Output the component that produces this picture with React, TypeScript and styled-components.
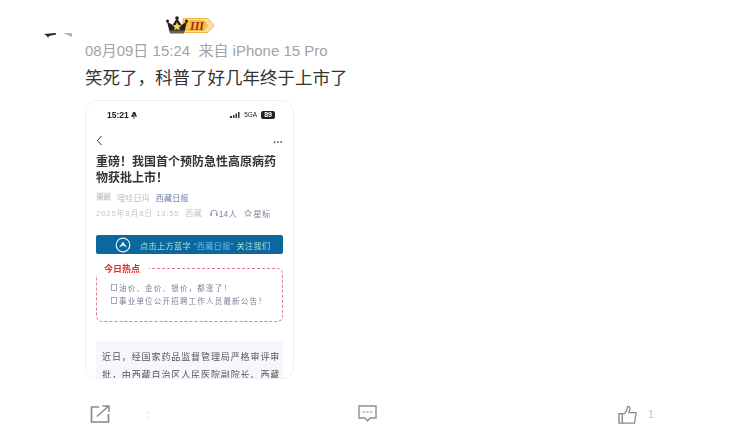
import React from 'react';
import styled, { createGlobalStyle } from 'styled-components';

const cjk = '"Liberation Sans", "Noto Sans CJK SC", sans-serif';

const GlobalStyle = createGlobalStyle`
  html, body {
    margin: 0;
    background: #fff;
  }
  body {
    font-family: ${cjk};
  }
`;

const Page = styled.div`
  width: 746px;
  height: 431px;
  padding-top: 16px;
  box-sizing: border-box;
  overflow: hidden;
`;

const Post = styled.div`
  display: grid;
  grid-template-columns: 85px 1fr;
`;

const AvatarSliver = styled.svg`
  display: block;
  margin: 17px 0 0 44px;
`;

const NameRow = styled.div`
  display: flex;
  height: 18px;
  padding-left: 81px;
`;

const Meta = styled.div`
  margin-top: 8px;
  font-size: 15px;
  line-height: 18px;
  color: #a3a3a3;
  white-space: pre;
`;

const Content = styled.div`
  margin-top: 5px;
  font-size: 17.5px;
  line-height: 26px;
  color: #333;
`;

const PhoneShot = styled.div`
  width: 209px;
  height: 279px;
  margin-top: 9px;
  box-sizing: border-box;
  padding: 0 10px;
  border: 1px solid #f1f1f4;
  border-radius: 12px;
  overflow: hidden;
  background: #fff;
  filter: blur(0.45px);
`;

const StatusBar = styled.div`
  display: flex;
  align-items: center;
  justify-content: space-between;
  height: 27px;
  padding: 0 8px 0 11px;
  font-size: 8.5px;
  font-weight: 700;
  color: #222;
`;

const StatusTime = styled.span`
  display: flex;
  align-items: center;
  gap: 1px;
`;

const StatusRight = styled.div`
  display: flex;
  align-items: center;
  gap: 4px;
  font-size: 6.5px;
  font-weight: 400;
`;

const Battery = styled.span`
  padding: 0 3px;
  border-radius: 2px;
  background: #222;
  color: #fff;
  font-size: 7px;
  font-weight: 700;
  line-height: 8px;
`;

const NavBar = styled.div`
  display: flex;
  align-items: center;
  justify-content: space-between;
  height: 25px;
  padding-bottom: 1px;
  box-sizing: border-box;
`;

const Dots = styled.span`
  font-size: 10px;
  font-weight: 700;
  letter-spacing: 0.5px;
  line-height: 10px;
  color: #555;
`;

const ArticleTitle = styled.div`
  margin-top: 1px;
  font-size: 12px;
  font-weight: 700;
  line-height: 16px;
  color: #333;
`;

const TagRow = styled.div`
  display: flex;
  align-items: center;
  gap: 6px;
  margin-top: 5px;
  height: 11px;
  font-size: 8.2px;
  color: #c0c0c0;
`;

const OriginalTag = styled.span`
  padding: 0 1px;
  font-size: 6.5px;
  line-height: 9px;
  background: #f2f2f2;
  color: #b0b0b0;
`;

const SourceLink = styled.span`
  color: #6b7ea8;
`;

const InfoRow = styled.div`
  display: flex;
  align-items: center;
  margin-top: 5px;
  height: 11px;
  font-size: 8px;
  letter-spacing: 0.7px;
  color: #c6c6c6;
  white-space: pre;
`;

const InfoAccent = styled.span`
  display: flex;
  align-items: center;
  gap: 1px;
  margin-left: 7px;
  letter-spacing: 0.2px;
  font-size: 8.5px;
  color: #7c86a0;
`;

const Banner = styled.div`
  display: flex;
  align-items: center;
  gap: 9px;
  height: 19px;
  margin-top: 17px;
  padding-left: 19px;
  border-radius: 2px;
  background: #0b689f;
  font-size: 8.2px;
  letter-spacing: 0.33px;
  color: #a6e0cf;
  white-space: pre;
`;

const BannerName = styled.span`
  color: #62bde8;
`;

const Hot = styled.div`
  position: relative;
  height: 54px;
  margin-top: 14px;
  box-sizing: border-box;
  padding: 12px 0 0 14px;
  border: 1px dashed #e07f85;
  border-radius: 6px;
`;

const HotLabel = styled.span`
  position: absolute;
  top: -6px;
  left: -1px;
  padding: 0 9px 0 8px;
  background: #fff;
  font-size: 9px;
  font-weight: 700;
  line-height: 12px;
  color: #d8322c;
`;

const HotLine = styled.div`
  display: flex;
  align-items: center;
  gap: 2px;
  height: 13px;
  font-size: 7.5px;
  letter-spacing: 1.2px;
  color: #7b8296;
  white-space: pre;
`;

const LineMark = styled.span`
  width: 4px;
  height: 5px;
  border: 1px solid #a4a9b8;
`;

const Quote = styled.div`
  margin-top: 19px;
  padding: 7px 0 0 6px;
  height: 60px;
  background: #f5f7fc;
  font-size: 9px;
  letter-spacing: 0.9px;
  line-height: 18px;
  color: #555;
  white-space: pre;
`;

const Actions = styled.div`
  display: flex;
  align-items: center;
  height: 22px;
  margin-top: 24px;
  padding-left: 90px;
`;

const Action = styled.div<{ $width: number }>`
  display: flex;
  align-items: center;
  width: ${(p) => p.$width}px;
`;

const Ghost = styled.span<{ $offset: number }>`
  margin-left: ${(p) => p.$offset}px;
  font-size: 11px;
  color: #c8c8c8;
`;

const CrownBadge = () => (
  <svg width="50" height="19" viewBox="0 0 50 19">
    <path d="M17 2.500 H42 L48 9.500 L42 16.500 H17 Z" fill="#fbe09a" stroke="#f3b548" strokeWidth="1" />
    <path d="M17 4 H38 L42.500 9.500 L38 15 H17 Z" fill="#f7bf45" />
    <text x="24" y="14" fontFamily="Liberation Serif, serif" fontSize="12" fontStyle="italic" fontWeight="700" fill="#a02c14">III</text>
    <path d="M1 5.500 L6.500 9 L11 2 L15.500 9 L21 5.500 L18.500 15.500 H3.500 Z" fill="#26211d" />
    <circle cx="1.500" cy="5" r="1.500" fill="#26211d" />
    <circle cx="11" cy="2" r="1.800" fill="#26211d" />
    <circle cx="20.500" cy="5" r="1.500" fill="#26211d" />
    <path d="M3.500 14.500 H18.500 L18 17.500 H4 Z" fill="#6d6250" />
    <path d="M11 6 L12.400 9 L15.500 9.400 L13.200 11.400 L13.800 14.300 L11 12.900 L8.200 14.300 L8.800 11.400 L6.500 9.400 L9.600 9 Z" fill="#f6cf56" />
  </svg>
);

const MutedBell = () => (
  <svg width="8" height="8" viewBox="0 0 8 8">
    <path d="M4 1 C2.500 1 2 2.200 2 3.500 L1 5.800 H7 L6 3.500 C6 2.200 5.500 1 4 1 Z" fill="#222" />
    <path d="M1 1 L7 7.500" stroke="#fff" strokeWidth="0.700" />
    <path d="M3.200 6.500 H4.800 V7.500 H3.200 Z" fill="#222" />
  </svg>
);

const BackIcon = () => (
  <svg width="7" height="11" viewBox="0 0 7 11">
    <path d="M5.500 1 L1.500 5.500 L5.500 10" fill="none" stroke="#333" strokeWidth="1" />
  </svg>
);

const Signal = () => (
  <svg width="10" height="6" viewBox="0 0 10 6">
    <path d="M0 4h2v2H0zM3 3h1.500v3H3zM5.500 1.500H7V6H5.500zM8 0h1.500v6H8z" fill="#333" />
  </svg>
);

const ArrowBadge = () => (
  <svg width="16" height="16" viewBox="0 0 16 16">
    <circle cx="8" cy="8" r="6.800" fill="none" stroke="#dff2f5" strokeWidth="1.200" />
    <path d="M4 10.500 L8 4.500 L12 10.500 L8 8.500 Z" fill="#dff2f5" />
  </svg>
);

const Headset = () => (
  <svg width="8" height="8" viewBox="0 0 8 8">
    <path d="M1 6 V4 A3 3 0 0 1 7 4 V6" fill="none" stroke="#7c86a0" strokeWidth="0.800" />
    <path d="M0.600 4.500h1.200v2.500H0.600zM6.200 4.500h1.200v2.500H6.200z" fill="#7c86a0" />
  </svg>
);

const StarOutline = () => (
  <svg width="8" height="8" viewBox="0 0 8 8">
    <path d="M4 0.600 L5 3 L7.500 3.200 L5.600 4.800 L6.200 7.300 L4 6 L1.800 7.300 L2.400 4.800 L0.500 3.200 L3 3 Z" fill="none" stroke="#7c86a0" strokeWidth="0.700" />
  </svg>
);

const ShareIcon = () => (
  <svg width="20" height="18" viewBox="0 0 20 18">
    <path d="M9 2 H1.500 V17 H18.500 V9" fill="none" stroke="#8a8a8a" strokeWidth="1.700" />
    <path d="M7 11.500 L18 1.500 M12.500 1 H19 V7" fill="none" stroke="#8a8a8a" strokeWidth="1.500" />
  </svg>
);

const CommentIcon = () => (
  <svg width="19" height="18" viewBox="0 0 19 18">
    <path d="M1 1 H18 V13 H12 L9.500 16 L7 13 H1 Z" fill="none" stroke="#8f8f8f" strokeWidth="1.400" />
    <path d="M4.500 7 H7 M8.300 7 H10.800 M12 7 H14.500" stroke="#8f8f8f" strokeWidth="1.200" />
  </svg>
);

const LikeIcon = () => (
  <svg width="19" height="19" viewBox="0 0 20 20">
    <path d="M1 9 H4.500 V19 H1 Z" fill="none" stroke="#8a8a8a" strokeWidth="1.400" />
    <path d="M4.500 9 H7 L9.500 5 L10 1.500 C12 1 13 3 12.500 5 L11.500 8 H19 L17.500 19 H4.500" fill="none" stroke="#8a8a8a" strokeWidth="1.400" />
  </svg>
);

const App: React.FC = () => (
  <Page>
    <GlobalStyle />
    <Post>
      <AvatarSliver width="28" height="6" viewBox="0 0 28 6">
        <path d="M0 1 L12 0 V1.500 L5 3 L4 5 L3 3 Z" fill="#222" />
        <path d="M19 0 H28 V4 Z" fill="#b5b5b5" />
      </AvatarSliver>
      <div>
        <NameRow>
          <CrownBadge />
        </NameRow>
        <Meta>08月09日 15:24  来自 iPhone 15 Pro</Meta>
        <Content>笑死了，科普了好几年终于上市了</Content>
        <PhoneShot>
          <StatusBar>
            <StatusTime>
              15:21
              <MutedBell />
            </StatusTime>
            <StatusRight>
              <Signal />
              <span>5GA</span>
              <Battery>89</Battery>
            </StatusRight>
          </StatusBar>
          <NavBar>
            <BackIcon />
            <Dots>...</Dots>
          </NavBar>
          <ArticleTitle>
            重磅！我国首个预防急性高原病药
            <br />
            物获批上市！
          </ArticleTitle>
          <TagRow>
            <OriginalTag>原创</OriginalTag>
            <span>嗖哇日玛</span>
            <SourceLink>西藏日报</SourceLink>
          </TagRow>
          <InfoRow>
            2025年8月8日 13:55  西藏
            <InfoAccent>
              <Headset />
              14人
            </InfoAccent>
            <InfoAccent>
              <StarOutline />
              星标
            </InfoAccent>
          </InfoRow>
          <Banner>
            <ArrowBadge />
            <span>
              点击上方蓝字 <BannerName>“西藏日报”</BannerName> 关注我们
            </span>
          </Banner>
          <Hot>
            <HotLabel>今日热点</HotLabel>
            <HotLine>
              <LineMark />
              油价、金价、银价，都涨了！
            </HotLine>
            <HotLine>
              <LineMark />
              事业单位公开招聘工作人员最新公告！
            </HotLine>
          </Hot>
          <Quote>
            近日，经国家药品监督管理局严格审评审
            {'\n'}
            批，由西藏自治区人民医院副院长、西藏
          </Quote>
        </PhoneShot>
      </div>
    </Post>
    <Actions>
      <Action $width={268}>
        <ShareIcon />
        <Ghost $offset={36}>:</Ghost>
      </Action>
      <Action $width={260}>
        <CommentIcon />
      </Action>
      <Action $width={60}>
        <LikeIcon />
        <Ghost $offset={11}>1</Ghost>
      </Action>
    </Actions>
  </Page>
);

export default App;
